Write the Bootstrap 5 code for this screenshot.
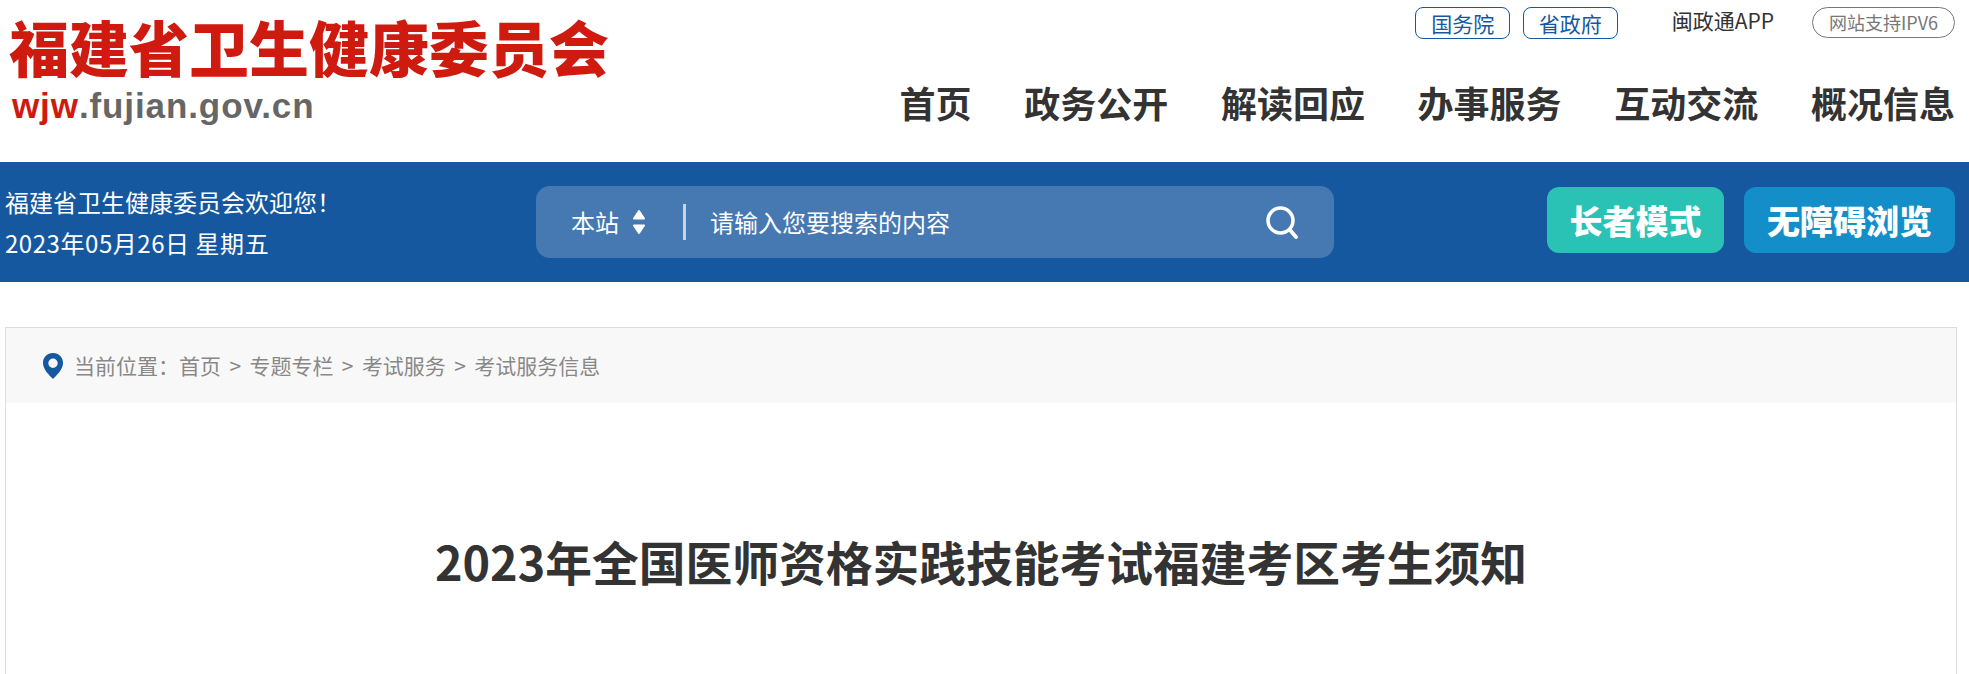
<!DOCTYPE html>
<html lang="zh-CN">
<head>
  <meta charset="UTF-8">
  <title>福建省卫生健康委员会</title>
  <link href="https://cdn.jsdelivr.net/npm/bootstrap@5.3.2/dist/css/bootstrap.min.css" rel="stylesheet">
  <style>
    html, body { height: 674px; overflow: hidden; }
    body { font-family: "Noto Sans", "Noto Sans CJK SC", sans-serif; color: #333; background: #fff; }
    .wrap-box { margin-left: 5px; width: 1952px; }

    /* cabecera */
    .top-head { height: 162px; }
    .logo-box { padding-left: 4px; padding-top: 11px; }
    .logo-cn { font-family: "Noto Sans CJK SC", sans-serif; font-weight: 900; font-size: 60px; line-height: 70px; color: #cf1a10; white-space: nowrap; }
    .logo-en { font-family: "Liberation Sans", sans-serif; font-weight: 700; font-size: 35px; line-height: 40px; color: #666; letter-spacing: 0.9px; margin-left: 3px; margin-top: 5px; }
    .logo-en b { color: #cf1a10; }
    .top-links { height: 40px; padding-top: 7px; font-size: 21px; font-family: "Noto Sans CJK SC", sans-serif; }
    .link-pill { display: block; width: 95px; height: 32px; line-height: 30px; text-align: center; color: #16589f; border: 1px solid #16589f; border-radius: 8px; text-decoration: none; }
    .link-pill + .link-pill { margin-left: 12.5px; }
    .link-app { color: #333; line-height: 27px; margin-left: 54px; margin-right: 38px; }
    .link-ipv { width: 143px; height: 31px; line-height: 29px; text-align: center; color: #777; border: 1px solid #777; border-radius: 16px; font-size: 18px; margin-right: 2px; }
    .main-nav { margin-top: 35px; gap: 52.7px; margin-right: 2px; }
    .main-nav a { font-family: "Noto Sans CJK SC", sans-serif; font-size: 36px; line-height: 54px; font-weight: 700; color: #333; text-decoration: none; }

    /* franja azul */
    .blue-band { height: 120px; background: #16589f; color: #fff; }
    .band-inner { height: 120px; }
    .welcome { width: 531px; font-family: "Noto Sans CJK SC", sans-serif; font-size: 24px; line-height: 41px; }
    .date-line { letter-spacing: 0.55px; }
    .search-box { width: 798px; height: 72px; background: #4678b2; border-radius: 14px; font-family: "Noto Sans CJK SC", sans-serif; font-size: 24px; }
    .site-pick { width: 150px; padding-left: 35px; height: 36px; line-height: 36px; border-right: 3px solid #c5d4e6; }
    .search-text { padding-left: 24px; }
    .search-ico { margin-right: 35px; }
    .mode-btn { height: 66px; line-height: 62px; border-radius: 12px; color: #fff; font-family: "Noto Sans CJK SC", sans-serif; font-size: 33px; font-weight: 900; text-align: center; border: 0; padding: 0; }
    .mode-old { width: 177px; background: #29c2b5; }
    .mode-free { width: 211px; background: #138ec9; margin-left: 20px; }
    .mode-row { margin-right: 2px; margin-bottom: 4px; }

    /* contenido */
    .page-box { margin-top: 45px; height: 500px; border: 1px solid #ddd; }
    .crumb-bar { height: 75px; background: #f8f8f8; padding-left: 36px; font-family: "Noto Sans CJK SC", sans-serif; font-size: 21px; color: #888; }
    .crumb-bar svg { margin-right: 10px; }
    .crumb-bar span { margin: 0 8.4px; }
    .doc-title { font-family: "Noto Sans CJK SC", sans-serif; font-size: 46.75px; font-weight: 700; line-height: 70px; color: #333; text-align: center; margin: 0; padding-top: 123px; }
  </style>
</head>
<body>

  <!-- cabecera -->
  <div class="wrap-box top-head d-flex justify-content-between">
    <div class="logo-box">
      <div class="logo-cn">福建省卫生健康委员会</div>
      <div class="logo-en"><b>wjw</b>.fujian.gov.cn</div>
    </div>
    <div class="d-flex flex-column align-items-end">
      <div class="top-links d-flex align-items-start">
        <a class="link-pill" href="#">国务院</a>
        <a class="link-pill" href="#">省政府</a>
        <div class="link-app">闽政通APP</div>
        <div class="link-ipv">网站支持IPV6</div>
      </div>
      <nav class="main-nav d-flex">
        <a href="#">首页</a>
        <a href="#">政务公开</a>
        <a href="#">解读回应</a>
        <a href="#">办事服务</a>
        <a href="#">互动交流</a>
        <a href="#">概况信息</a>
      </nav>
    </div>
  </div>

  <!-- franja azul -->
  <div class="blue-band">
    <div class="wrap-box band-inner d-flex align-items-center">
      <div class="welcome">
        <div>福建省卫生健康委员会欢迎您！</div>
        <div class="date-line">2023年05月26日 星期五</div>
      </div>
      <div class="search-box d-flex align-items-center">
        <div class="site-pick d-flex align-items-center">
          本站
          <svg class="ms-2 ps-1" width="20" height="28" viewBox="0 0 16 28"><path d="M8 3 L13 10.5 H3 Z M8 25 L3 17.5 H13 Z" fill="#fff" stroke="#fff" stroke-width="2" stroke-linejoin="round"/></svg>
        </div>
        <div class="search-text flex-grow-1">请输入您要搜索的内容</div>
        <svg class="search-ico" width="34" height="34" viewBox="0 0 34 34"><circle cx="15.5" cy="15.5" r="12.5" fill="none" stroke="#fff" stroke-width="3.5"/><path d="M25 25 L31 32" stroke="#fff" stroke-width="3.8" stroke-linecap="round"/></svg>
      </div>
      <div class="ms-auto d-flex mode-row">
        <button class="mode-btn mode-old">长者模式</button>
        <button class="mode-btn mode-free">无障碍浏览</button>
      </div>
    </div>
  </div>

  <!-- contenido -->
  <div class="wrap-box page-box">
    <div class="crumb-bar d-flex align-items-center">
      <svg width="22" height="26" viewBox="0 0 22 26"><path fill-rule="evenodd" d="M11 0 C4.9 0 1 4.5 1 10 C1 16.5 7.5 22.5 11 26 C14.5 22.5 21 16.5 21 10 C21 4.5 17.1 0 11 0 Z M11 5.5 A4.7 4.7 0 1 1 11 14.9 A4.7 4.7 0 1 1 11 5.5 Z" fill="#16589f"/></svg>
      当前位置：首页<span>&gt;</span>专题专栏<span>&gt;</span>考试服务<span>&gt;</span>考试服务信息
    </div>
    <h1 class="doc-title">2023年全国医师资格实践技能考试福建考区考生须知</h1>
  </div>

  <script src="https://cdn.jsdelivr.net/npm/bootstrap@5.3.2/dist/js/bootstrap.bundle.min.js"></script>
</body>
</html>
